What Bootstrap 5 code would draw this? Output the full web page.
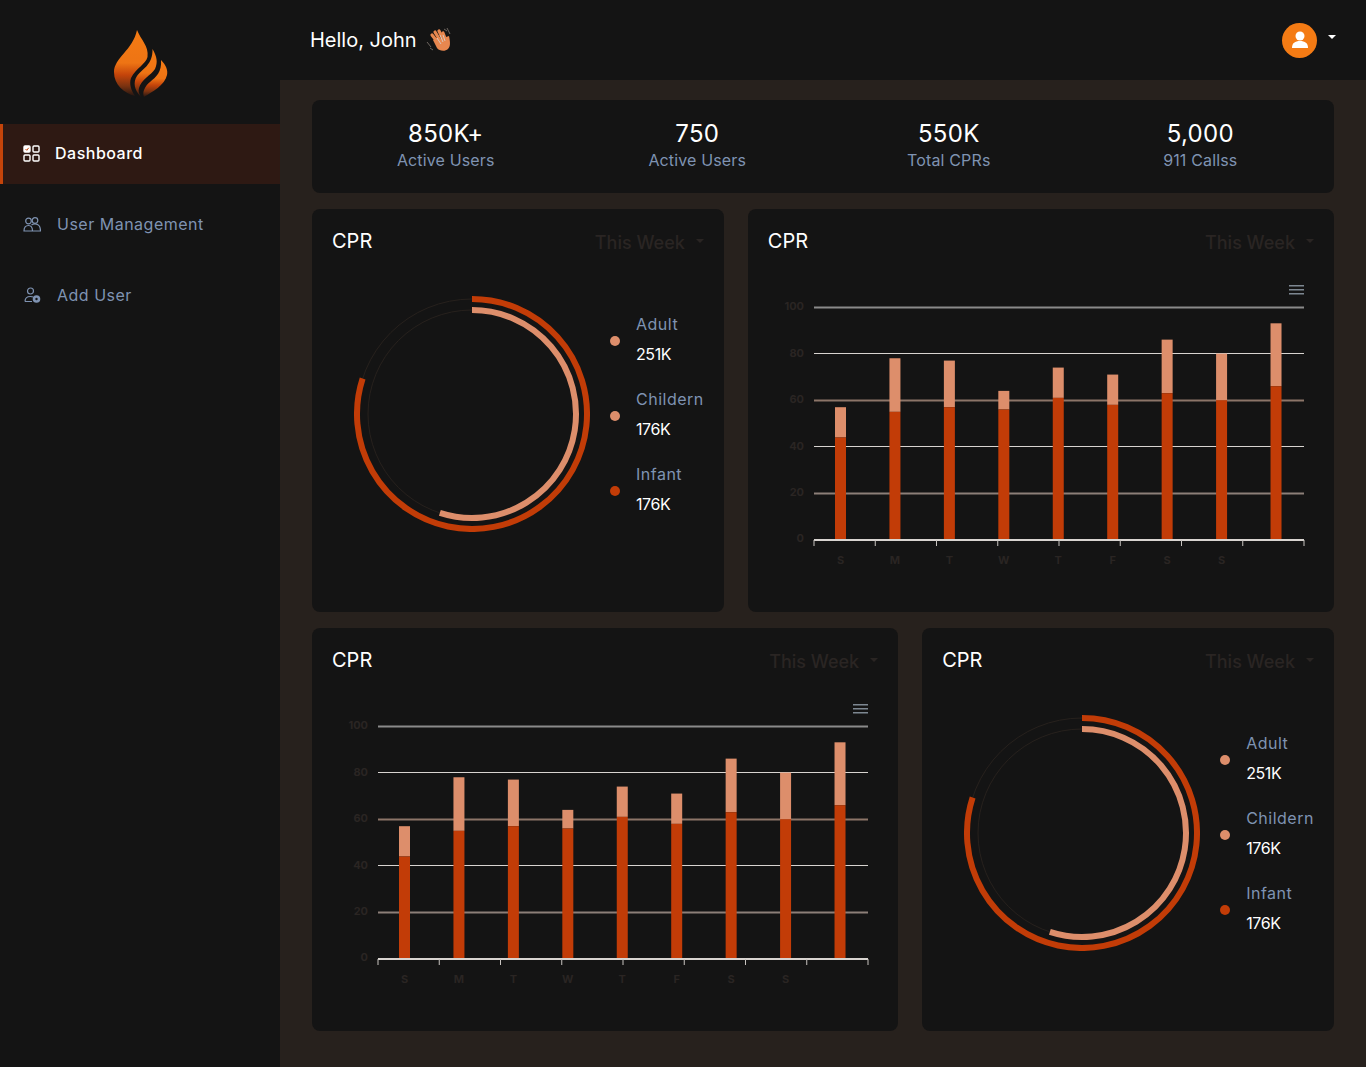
<!DOCTYPE html>
<html lang="en">

<head>
    <meta charset="UTF-8">
    <title>Dashboard</title>
    <link href="https://cdn.jsdelivr.net/npm/bootstrap@5.3.3/dist/css/bootstrap.min.css" rel="stylesheet">
    <style>
        body {
            background: #27211d;
            color: #fff;
            font-family: Inter, "Noto Sans", sans-serif;
        }

        .side-bar {
            width: 280px;
            flex: none;
            background: #141414;
        }

        .logo-box {
            height: 124px;
            padding: 28px 0 0 110px;
        }

        .side-link {
            display: flex;
            align-items: center;
            height: 60px;
            margin-bottom: 11px;
            padding: 0 0 2px 23px;
            color: #7f93b2;
            font-size: 16px;
            letter-spacing: .5px;
        }

        .side-link svg {
            margin-right: 16px;
        }

        .side-link.active {
            color: #fff;
            background: #2e1913;
            border-left: 3px solid #c4440a;
            padding-left: 20px;
            font-weight: 500;
        }

        .side-link.active svg {
            margin-right: 15px;
        }

        .top-bar {
            height: 80px;
            background: #141414;
            padding: 0 30px;
        }

        .hello-text {
            font-size: 20px;
            margin-right: 9px;
        }

        .user-btn {
            color: #fff;
            gap: 11px;
        }

        .user-btn::after {
            margin: 0 0 6px 0;
        }

        .user-pic {
            width: 35px;
            height: 35px;
            border-radius: 50%;
            background: #f47b14;
        }

        .page-body {
            padding: 20px 32px 36px;
        }

        .dark-card {
            background: #141414;
            border: 0;
            border-radius: 8px;
            color: #fff;
        }

        .stats-card {
            padding: 19px 8px 21px;
            margin-bottom: 16px;
        }

        .stat-value {
            font-size: 24px;
            line-height: 29px;
            letter-spacing: .3px;
        }

        .stat-label {
            font-size: 16px;
            line-height: 24px;
            color: #7f93b2;
            letter-spacing: .15px;
        }

        .chart-card {
            padding: 20px;
        }

        .card-name {
            font-size: 20px;
            line-height: 24px;
        }

        .week-pick {
            color: #2a2523;
            font-size: 18px;
            font-weight: 500;
            line-height: 20px;
            height: 24px;
            padding: 4px 0 0;
            gap: 11px;
        }

        .week-pick::after {
            margin: 0 0 4px;
            border-top-width: 4px;
            border-left-width: 4px;
            border-right-width: 4px;
        }

        .donut-box {
            margin: 43px 0 0 22px;
        }

        .donut-legend {
            margin-left: 20px;
            gap: 21px;
        }

        .legend-dot {
            width: 10px;
            height: 10px;
            border-radius: 50%;
            margin: 4px 16px 0 0;
        }

        .legend-name {
            color: #7f93b2;
            font-size: 16px;
            line-height: 24px;
            margin-bottom: 6px;
            letter-spacing: .5px;
        }

        .legend-num {
            font-size: 16px;
            line-height: 24px;
            letter-spacing: -.4px;
        }

        .dot-light {
            background: #dd8e6b;
        }

        .dot-dark {
            background: #c23c07;
        }

        .bar-chart {
            display: block;
        }

        .bar-chart text {
            fill: #2a2523;
            font-size: 11px;
            font-weight: 700;
        }
    </style>
</head>

<body>
    <div class="d-flex min-vh-100">
        <aside class="side-bar">
            <div class="logo-box">
                <svg width="60" height="72" viewBox="110 28 60 72">
                    <defs>
                        <linearGradient id="flame" x1="0" y1="0" x2="0" y2="1">
                            <stop offset="0" stop-color="#f47b14" />
                            <stop offset=".5" stop-color="#ee7414" />
                            <stop offset=".68" stop-color="#c4440a" />
                            <stop offset=".85" stop-color="#7a3210" />
                            <stop offset="1" stop-color="#231612" />
                        </linearGradient>
                    </defs>
                    <g fill="url(#flame)">
                        <path d="M137 30C141 40 149 46 147.500 57C146 64 136 68 131 78C129 84 131 90 135 96C124 93 114 85 114 72C114 58 133 50 137 30Z" />
                        <path d="M152.500 49C157 57 158 62 155 69C151 75 141 80 139 88C138 91 139 94 141 97C134 90 133 82 137 76C142 69 153 65 152.500 49Z" />
                        <path d="M161 60C166 65 168 70 167 75C165 85 152 92 144 97C142 92 145 86 150 82C156 77 162 72 161 60Z" />
                    </g>
                </svg>
            </div>
            <nav class="nav flex-column">
                <a class="side-link active text-decoration-none" href="#">
                    <svg width="17" height="17" viewBox="0 0 17 17" fill="none" stroke="#fff" stroke-width="1.400">
                        <rect x="1" y="1" width="6" height="6" rx="1" fill="#fff" />
                        <path d="M2.500 4L3.800 5.300L5.700 2.800" stroke="#c4440a" stroke-width="1" />
                        <rect x="10" y="1" width="6" height="6" rx="1" />
                        <rect x="1" y="10" width="6" height="6" rx="1" />
                        <rect x="10" y="10" width="6" height="6" rx="1" />
                    </svg>Dashboard
                </a>
                <a class="side-link text-decoration-none" href="#">
                    <svg width="18" height="15" viewBox="0 0 18 15" fill="none" stroke="#7f93b2" stroke-width="1.200">
                        <circle cx="5.500" cy="4" r="2.800" />
                        <circle cx="12" cy="3.500" r="2.800" />
                        <path d="M1 14C1 10 3 8.500 5.500 8.500C8 8.500 9.500 10 9.500 14ZM8.500 8C9.500 7 10.500 7 12 7C15 7 17.500 9 17.500 14H9.500" />
                    </svg>User Management
                </a>
                <a class="side-link text-decoration-none" href="#">
                    <svg width="18" height="16" viewBox="0 0 18 16" fill="none" stroke="#7f93b2" stroke-width="1.200">
                        <circle cx="7.500" cy="4" r="3" />
                        <path d="M2 14.500C2 11 4.500 9.500 7.500 9.500C8.500 9.500 9.500 9.700 10 10M2 14.500H9" />
                        <circle cx="13.500" cy="12" r="3.800" fill="#7f93b2" stroke="none" />
                        <circle cx="13.500" cy="12" r="1.200" fill="#141414" stroke="none" />
                    </svg>Add User
                </a>
            </nav>
        </aside>

        <div class="flex-grow-1">
            <header class="top-bar d-flex align-items-center justify-content-between">
                <div class="d-flex align-items-center">
                    <span class="hello-text">Hello, John</span>
                    <svg width="26" height="24" viewBox="0 0 26 24">
                        <g stroke="#e8874f" stroke-width="3.200" stroke-linecap="round" fill="none">
                            <path d="M6 7L13 16" />
                            <path d="M9 4L15 14" />
                            <path d="M13 3L18 13" />
                            <path d="M17 5L20 13" />
                        </g>
                        <path d="M7 12L11 20C13 23 19 24 22 21C25 18 24 13 23 8L20 9L20 14L12 9Z" fill="#e8874f" />
                        <path d="M11 10L15 16M14 7L17 14M17 7L19 13" stroke="#d9c6bb" stroke-width="1" fill="none" />
                        <path d="M1 14L5 19M4 20L7 22M18 1L21 3M21 0L24 6" stroke="#6e6660" stroke-width="1" fill="none" />
                    </svg>
                </div>
                <div class="dropdown">
                    <a class="user-btn d-flex align-items-center dropdown-toggle text-decoration-none" href="#" data-bs-toggle="dropdown">
                        <span class="user-pic d-flex align-items-center justify-content-center">
                            <svg width="18" height="18" viewBox="0 0 18 18" fill="#fff">
                                <circle cx="9" cy="5" r="4.500" />
                                <path d="M1 17C1 12 4 10 9 10C14 10 17 12 17 17Z" />
                            </svg>
                        </span>
                    </a>
                    <ul class="dropdown-menu dropdown-menu-end">
                        <li><a class="dropdown-item" href="#">Logout</a></li>
                    </ul>
                </div>
            </header>

            <main class="page-body">
                <div class="card dark-card stats-card">
                    <div class="row g-0 text-center">
                        <div class="col-3">
                            <div class="stat-value">850K+</div>
                            <div class="stat-label">Active Users</div>
                        </div>
                        <div class="col-3">
                            <div class="stat-value">750</div>
                            <div class="stat-label">Active Users</div>
                        </div>
                        <div class="col-3">
                            <div class="stat-value">550K</div>
                            <div class="stat-label">Total CPRs</div>
                        </div>
                        <div class="col-3">
                            <div class="stat-value">5,000</div>
                            <div class="stat-label">911 Callss</div>
                        </div>
                    </div>
                </div>

                <div class="row gx-4 gy-3">
                    <div class="col-5">
                        <div class="card dark-card chart-card h-100">
                            <div class="d-flex justify-content-between">
                                <div class="card-name">CPR</div>
                                <div class="week-pick d-flex align-items-center dropdown-toggle">This Week</div>
                            </div>
                            <div class="donut-box d-flex align-items-center" data-chart="donut"></div>
                        </div>
                    </div>
                    <div class="col-7">
                        <div class="card dark-card chart-card h-100">
                            <div class="d-flex justify-content-between">
                                <div class="card-name">CPR</div>
                                <div class="week-pick d-flex align-items-center dropdown-toggle">This Week</div>
                            </div>
                            <div data-chart="bars"></div>
                        </div>
                    </div>
                    <div class="col-7">
                        <div class="card dark-card chart-card h-100">
                            <div class="d-flex justify-content-between">
                                <div class="card-name">CPR</div>
                                <div class="week-pick d-flex align-items-center dropdown-toggle">This Week</div>
                            </div>
                            <div data-chart="bars"></div>
                        </div>
                    </div>
                    <div class="col-5">
                        <div class="card dark-card chart-card h-100">
                            <div class="d-flex justify-content-between">
                                <div class="card-name">CPR</div>
                                <div class="week-pick d-flex align-items-center dropdown-toggle">This Week</div>
                            </div>
                            <div class="donut-box d-flex align-items-center" data-chart="donut"></div>
                        </div>
                    </div>
                </div>
            </main>
        </div>
    </div>

    <script src="https://cdn.jsdelivr.net/npm/bootstrap@5.3.3/dist/js/bootstrap.bundle.min.js"></script>
    <script>
        const lowerBars = [44, 55, 57, 56, 61, 58, 63, 60, 66];
        const totalBars = [57, 78, 77, 64, 74, 71, 86, 80, 93];
        const dayNames = ['S', 'M', 'T', 'W', 'T', 'F', 'S', 'S'];
        const gridLines = [
            [100, '#8a8a8a'], [80, '#d8d4d0'], [60, '#8c7568'], [40, '#d8d4d0'], [20, '#8c7f78']
        ];
        const legendItems = [
            ['Adult', '251K', 'dot-light'],
            ['Childern', '176K', 'dot-light'],
            ['Infant', '176K', 'dot-dark']
        ];

        function barsSvg() {
            // plot area inside the svg: x 46..536, y 54..287
            const left = 46, right = 536, bottom = 287, high = 233;
            const yOf = v => bottom - high * v / 100;
            let out = '<svg class="bar-chart" width="546" height="339">';

            gridLines.forEach(([v, color]) => {
                const crisp = color === '#d8d4d0';
                out += `<rect x="${left}" y="${crisp ? Math.floor(yOf(v)) : Math.round(yOf(v)) - 0.5}" width="${right - left}" height="${crisp ? 1 : 2}" fill="${color}"/>`;
                out += `<text x="36" y="${yOf(v) + 3}" text-anchor="end">${v}</text>`;
            });
            out += `<text x="36" y="${bottom + 2}" text-anchor="end">0</text>`;

            lowerBars.forEach((v, i) => {
                const x = 67 + i * 54.44;
                out += `<rect x="${x}" y="${yOf(totalBars[i])}" width="11" height="${yOf(v) - yOf(totalBars[i])}" fill="#dd8e6b"/>`;
                out += `<rect x="${x}" y="${yOf(v)}" width="11" height="${bottom - yOf(v)}" fill="#c23c07"/>`;
            });

            out += `<rect x="${left}" y="${bottom - 1}" width="${right - left}" height="2" fill="#d8d4d0"/>`;
            for (let i = 0; i <= 8; i++) {
                out += `<rect x="${left + i * 61.25 - 0.5}" y="${bottom}" width="1" height="6" fill="#c8c4c0"/>`;
            }
            dayNames.forEach((d, i) => {
                out += `<text x="${72.500 + i * 54.44}" y="311" text-anchor="middle">${d}</text>`;
            });

            // chart menu icon
            [32, 36, 40].forEach(y => {
                out += `<rect x="521" y="${y}" width="15" height="1.500" fill="#7d8791"/>`;
            });
            return out + '</svg>';
        }

        function ringPath(r, percent) {
            const a = percent * 2 * Math.PI / 100;
            const x = 118 + r * Math.sin(a);
            const y = 118 - r * Math.cos(a);
            return `M118 ${118 - r}A${r} ${r} 0 ${percent > 50 ? 1 : 0} 1 ${x} ${y}`;
        }

        function donutHtml() {
            let out = '<svg width="236" height="236" class="flex-shrink-0" fill="none">';
            out += '<circle cx="118" cy="118" r="115" stroke="#27211d"/>';
            out += '<circle cx="118" cy="118" r="104" stroke="#27211d"/>';
            out += `<path d="${ringPath(115, 80)}" stroke="#c23c07" stroke-width="6"/>`;
            out += `<path d="${ringPath(104, 55)}" stroke="#dd8e6b" stroke-width="6"/>`;
            out += '</svg><div class="donut-legend d-flex flex-column">';
            legendItems.forEach(([name, num, dot]) => {
                out += `<div class="d-flex align-items-center"><span class="legend-dot ${dot}"></span>`;
                out += `<div><div class="legend-name">${name}</div><div class="legend-num">${num}</div></div></div>`;
            });
            return out + '</div>';
        }

        document.querySelectorAll('[data-chart="bars"]').forEach(el => { el.innerHTML = barsSvg(); });
        document.querySelectorAll('[data-chart="donut"]').forEach(el => { el.innerHTML = donutHtml(); });
    </script>
</body>

</html>
